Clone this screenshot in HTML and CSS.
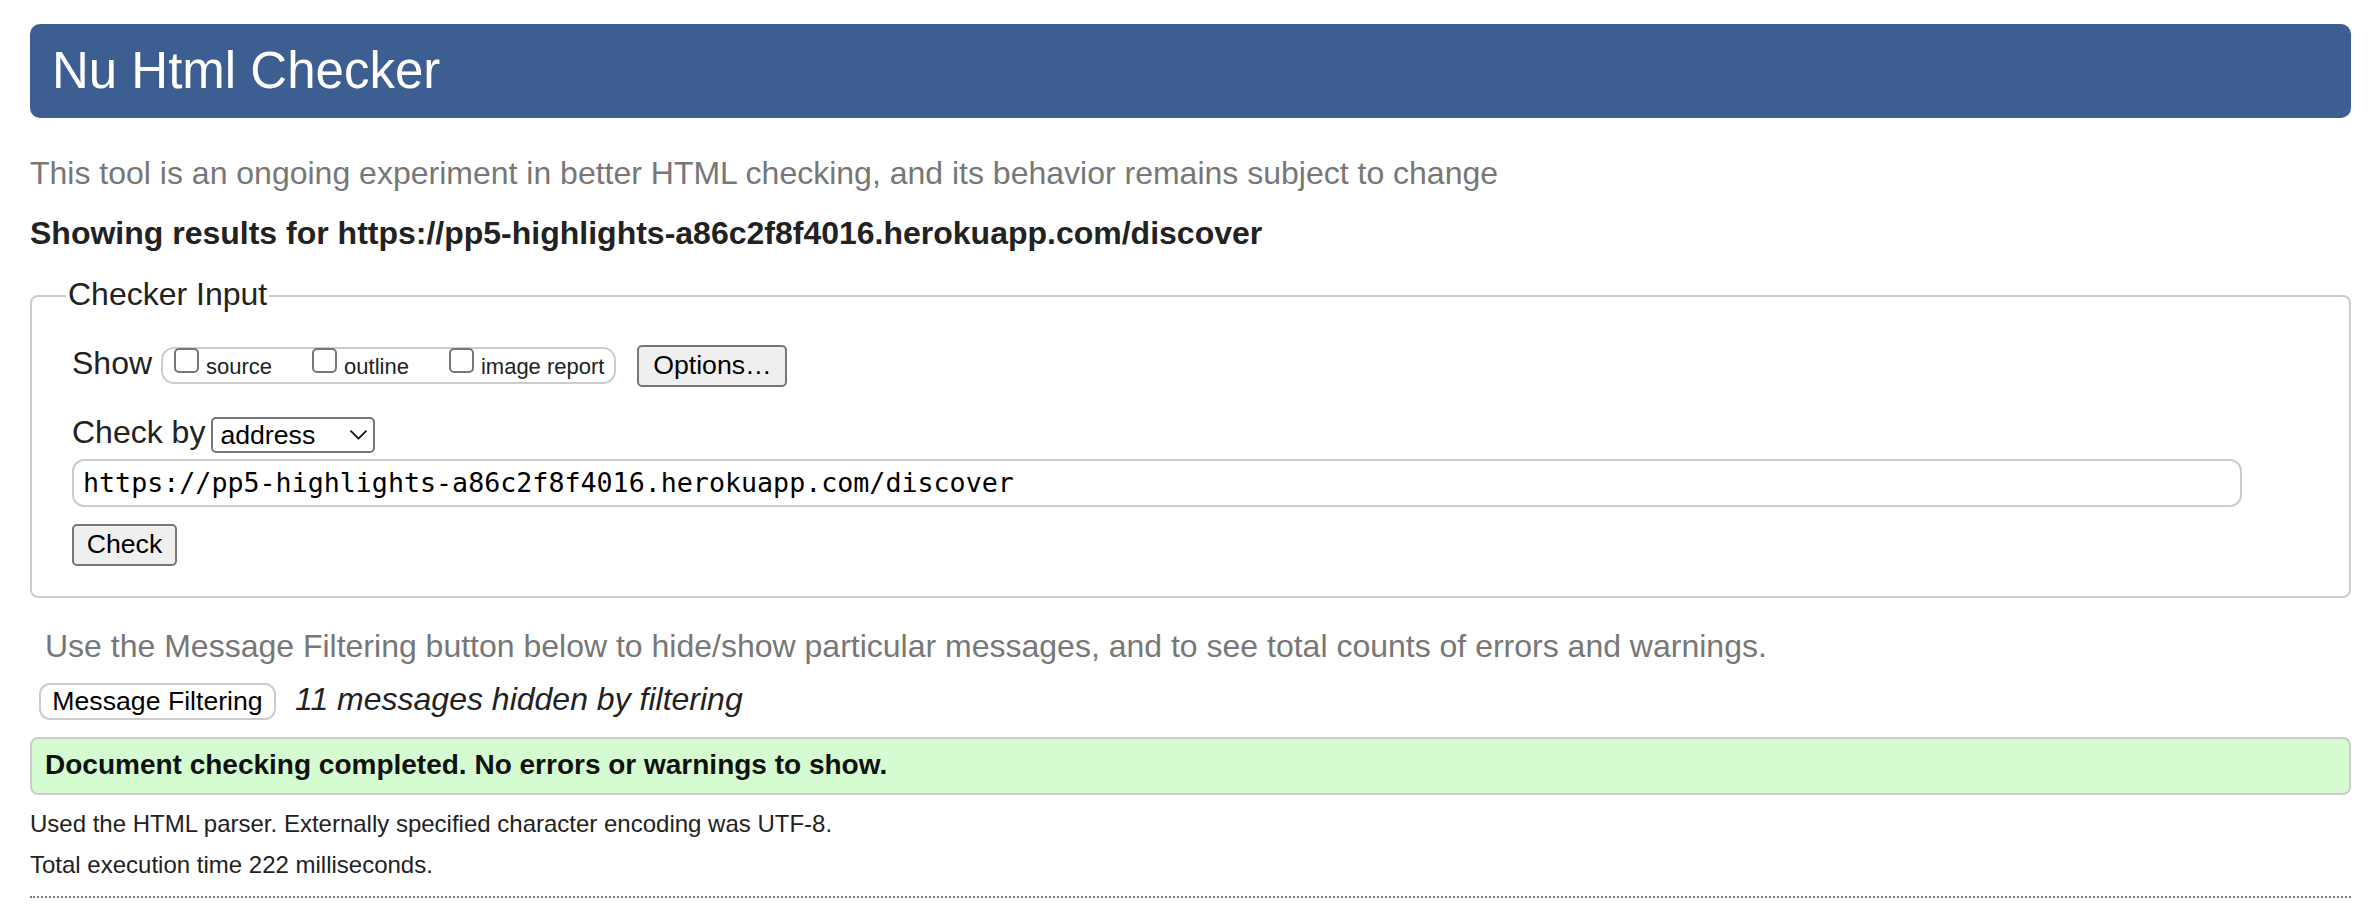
FILE: index.html
```html
<!DOCTYPE html>
<html lang="en">
<head>
<meta charset="utf-8">
<title>Showing results for https://pp5-highlights-a86c2f8f4016.herokuapp.com/discover - Nu Html Checker</title>
<link rel="stylesheet" href="styles.css">
</head>
<body>
<h1 class="title">Nu Html Checker</h1>
<p class="about">This tool is an ongoing experiment in better HTML checking, and its behavior remains subject to change</p>
<p class="results">Showing results for https://pp5-highlights-a86c2f8f4016.herokuapp.com/discover</p>
<form class="checker">
  <fieldset class="input-set">
    <legend class="legend">Checker Input</legend>
    <div class="row">
      <span class="row-label">Show</span>
      <span class="show-group">
        <label class="opt"><input type="checkbox" class="box"><span class="opt-text">source</span></label>
        <label class="opt"><input type="checkbox" class="box"><span class="opt-text">outline</span></label>
        <label class="opt"><input type="checkbox" class="box"><span class="opt-text">image report</span></label>
      </span>
      <button type="button" class="btn btn-options">Options…</button>
    </div>
    <div class="row row-by">
      <span class="row-label label-by">Check by</span>
      <span class="select-wrap">
        <select class="select"><option>address</option></select>
        <svg class="chev" width="17" height="10" viewBox="0 0 17 10" aria-hidden="true"><path d="M1 1.2 L8.5 8.6 L16 1.2" fill="none" stroke="#111" stroke-width="1.8" stroke-linecap="round" stroke-linejoin="round"/></svg>
      </span>
    </div>
    <input class="url" type="text" value="https://pp5-highlights-a86c2f8f4016.herokuapp.com/discover">
    <div class="row-submit"><button type="button" class="btn btn-check">Check</button></div>
  </fieldset>
</form>
<p class="filter-hint">Use the Message Filtering button below to hide/show particular messages, and to see total counts of errors and warnings.</p>
<div class="filter-row">
  <button type="button" class="btn-filter">Message Filtering</button>
  <span class="hidden-count">11 messages hidden by filtering</span>
</div>
<div class="success">Document checking completed. No errors or warnings to show.</div>
<p class="meta meta-first">Used the HTML parser. Externally specified character encoding was UTF-8.</p>
<p class="meta meta-second">Total execution time 222 milliseconds.</p>
<div class="rule"></div>
</body>
</html>
```
FILE: styles.css
```css
html, body {
  margin: 0;
  background: #fff;
}
body {
  padding: 24px 27px 0 30px;
  font-family: "Liberation Sans", Arial, sans-serif;
  color: #222;
}
.title {
  margin: 0;
  height: 94px;
  line-height: 94px;
  padding: 0 22px;
  background: #3d5e91;
  color: #fff;
  font-size: 51px;
  font-weight: normal;
  border-radius: 10px;
}
.about {
  margin: 36.5px 0 0;
  font-size: 32px;
  line-height: 36.8px;
  color: #777;
}
.results {
  margin: 24px 0 0;
  font-size: 32px;
  line-height: 36.8px;
  font-weight: bold;
  color: #222;
}
.checker {
  margin: 24px 0 0;
}
.input-set {
  margin: 0;
  padding: 27.7px 40px 30.5px;
  border: 2px solid #ccc;
  border-radius: 8px;
  min-width: 0;
}
.legend {
  margin-left: -6px;
  padding: 0 2px 4px;
  font-size: 32px;
  line-height: 36.8px;
  color: #222;
}
.row {
  display: flex;
  align-items: center;
  height: 42px;
}
.row-by {
  margin-top: 30px;
  height: 36px;
}
.row-label {
  font-size: 32px;
  line-height: 36.8px;
  margin: 0 9px 4px 0;
  color: #222;
}
.label-by {
  margin-right: 6px;
}
.show-group {
  display: flex;
  align-items: flex-start;
  box-sizing: border-box;
  height: 37px;
  padding: 0 10px 0 11px;
  border: 2px solid #ccc;
  border-radius: 13px;
  gap: 40px;
}
.opt {
  display: flex;
  align-items: flex-start;
  font-size: 22px;
  color: #222;
}
.box {
  appearance: none;
  -webkit-appearance: none;
  box-sizing: border-box;
  width: 25px;
  height: 25px;
  margin: -1px 7px 0 0;
  border: 2px solid #767676;
  border-radius: 5px;
  background: #fff;
}
.opt-text {
  margin-top: 5px;
  line-height: 25px;
}
.btn {
  box-sizing: border-box;
  height: 42px;
  padding: 0 13px;
  border: 2px solid #767676;
  border-radius: 5px;
  background: #efefef;
  color: #000;
  font-family: "Liberation Sans", Arial, sans-serif;
  font-size: 26.67px;
}
.btn-options {
  margin-left: 21px;
  width: 150px;
}
.select-wrap {
  position: relative;
  display: inline-block;
  height: 36px;
}
.select {
  appearance: none;
  -webkit-appearance: none;
  box-sizing: border-box;
  width: 164px;
  height: 36px;
  margin: 0;
  padding: 0 0 0 7px;
  border: 2px solid #767676;
  border-radius: 5px;
  background: #fff;
  color: #000;
  font-family: "Liberation Sans", Arial, sans-serif;
  font-size: 26.67px;
}
.chev {
  position: absolute;
  right: 8px;
  top: 13px;
  pointer-events: none;
}
.url {
  display: block;
  box-sizing: border-box;
  width: 97%;
  height: 48px;
  margin: 6px 0 0;
  padding: 0 9px;
  border: 2px solid #ccc;
  border-radius: 12px;
  font-family: "DejaVu Sans Mono", "Liberation Mono", monospace;
  font-size: 26.67px;
  color: #000;
  background: #fff;
}
.row-submit {
  margin-top: 17px;
  display: flex;
}
.btn-check {
  width: 105px;
  padding: 0;
}
.filter-hint {
  margin: 29.5px 0 0;
  padding-left: 15px;
  font-size: 32px;
  line-height: 36.8px;
  color: #777;
}
.filter-row {
  display: flex;
  align-items: center;
  height: 37px;
  margin-top: 18.7px;
}
.btn-filter {
  box-sizing: border-box;
  width: 237px;
  height: 37px;
  margin-left: 9px;
  padding: 0;
  border: 2px solid #ccc;
  border-radius: 11px;
  background: #fff;
  color: #000;
  font-family: "Liberation Sans", Arial, sans-serif;
  font-size: 26.67px;
}
.hidden-count {
  margin: 0 0 4px 19px;
  font-size: 32px;
  line-height: 36.8px;
  font-style: italic;
  color: #222;
}
.success {
  box-sizing: border-box;
  height: 58px;
  margin-top: 17px;
  padding: 0 13px 2px;
  line-height: 52px;
  border: 2px solid #ccc;
  border-radius: 8px;
  background: #d5fcd1;
  font-size: 28px;
  font-weight: bold;
  color: #111;
}
.meta {
  margin: 0;
  font-size: 24px;
  line-height: 27.6px;
  color: #222;
}
.meta-first {
  margin-top: 15px;
}
.meta-second {
  margin-top: 13.4px;
}
.rule {
  margin-top: 17px;
  border-top: 2px dotted #777;
}
```
